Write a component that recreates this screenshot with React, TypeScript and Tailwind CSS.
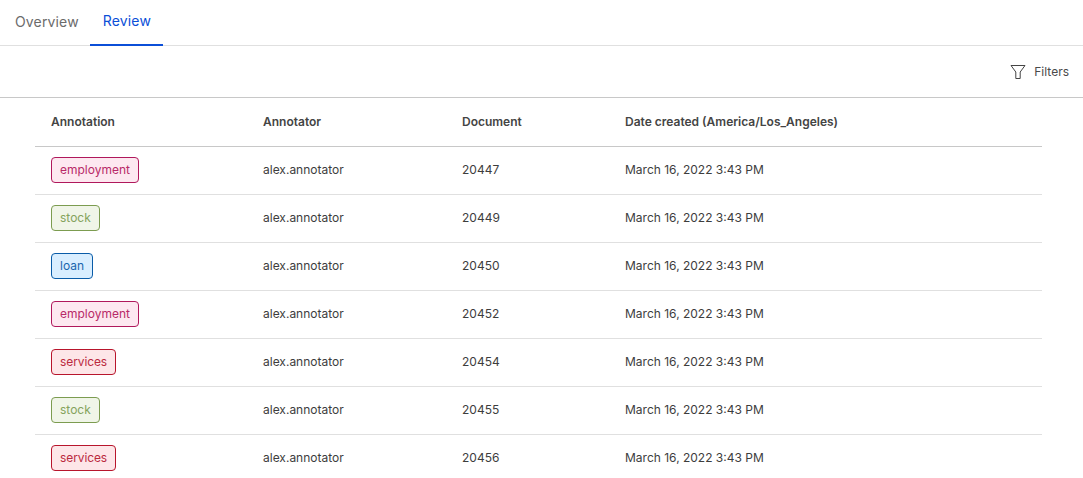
const rows = [
  { label: 'employment', kind: 'employment', doc: '20447' },
  { label: 'stock', kind: 'stock', doc: '20449' },
  { label: 'loan', kind: 'loan', doc: '20450' },
  { label: 'employment', kind: 'employment', doc: '20452' },
  { label: 'services', kind: 'services', doc: '20454' },
  { label: 'stock', kind: 'stock', doc: '20455' },
  { label: 'services', kind: 'services', doc: '20456' },
];

const tagStyles: Record<string, string> = {
  employment: 'bg-[#fde8f0] border-[#b0185c] text-[#b82a68]',
  stock: 'bg-[#f0f5e8] border-[#7c9c50] text-[#85a35c]',
  loan: 'bg-[#d9eeff] border-[#0a5ca8] text-[#1a66ae]',
  services: 'bg-[#fde6e8] border-[#b8152c] text-[#bb2a3e] tracking-[-0.1px]',
};

const gridCols = 'grid grid-cols-[212px_199px_163px_1fr] items-center px-4';

export default function App() {
  return (
    <div className="w-[1083px] h-[478px] overflow-hidden bg-white font-['Inter',sans-serif] text-[#3d3d3d]">
      <div className="flex h-[46px] border-b border-[#e0e0e0] pl-[3px]">
        <button className="h-[46px] pl-3 pr-[11px] pb-[2px] text-sm tracking-[0.15px] text-[#6b6b6b]">Overview</button>
        <button className="h-[46px] pl-[13px] pr-3 pb-[2px] text-sm tracking-[0.15px] text-[#0b4fd8] border-b-2 border-[#0b4fd8]">Review</button>
      </div>

      <div className="flex h-[52px] items-center justify-end gap-2 border-b border-[#c8c8c8] pr-[14px]">
        <svg width="16" height="16" viewBox="0 0 16 16" fill="none" stroke="#444" strokeWidth="1" strokeLinejoin="round">
          <path d="M1 1.5H15L10.2 8V14.5H5.8V8Z" />
        </svg>
        <span className="text-xs text-[#4a4a4a]">Filters</span>
      </div>

      <div className="ml-[35px] w-[1007px]">
        <div className={`${gridCols} h-[49px] border-b border-[#c8c8c8] text-xs font-semibold text-[#444444]`}>
          <div>Annotation</div>
          <div>Annotator</div>
          <div>Document</div>
          <div>Date created (America/Los_Angeles)</div>
        </div>
        {rows.map((row) => (
          <div key={row.doc} className={`${gridCols} h-[48px] pb-[2px] border-b border-[#e0e0e0] text-xs text-[#3d3d3d]`}>
            <div>
              <span className={`inline-flex h-[26px] items-center rounded-[4px] border px-2 ${tagStyles[row.kind]}`}>
                {row.label}
              </span>
            </div>
            <div>alex.annotator</div>
            <div>{row.doc}</div>
            <div>March 16, 2022 3:43 PM</div>
          </div>
        ))}
      </div>
    </div>
  );
}
